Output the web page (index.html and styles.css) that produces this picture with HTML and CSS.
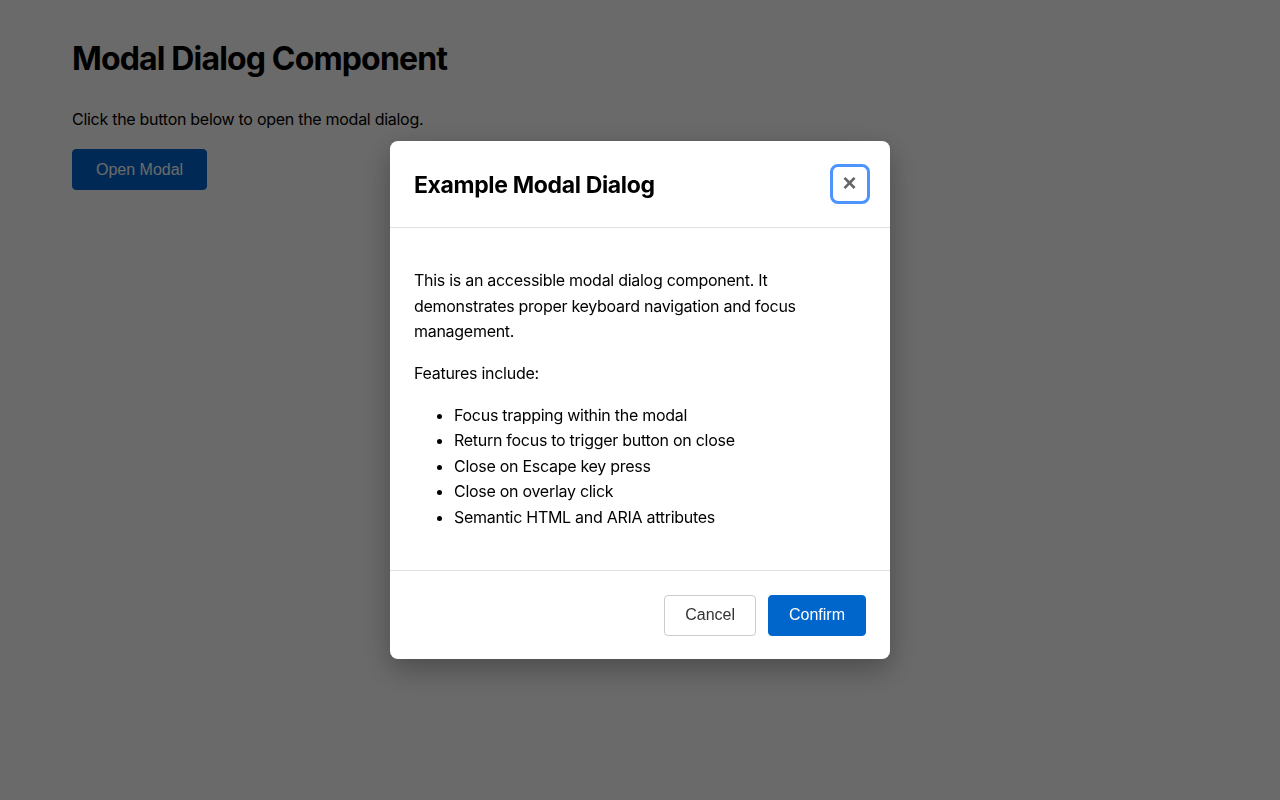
FILE: index.html
```html
<!DOCTYPE html>
<html lang="en">
<head>
<meta charset="utf-8">
<title>Modal Dialog Component</title>
<link rel="stylesheet" href="styles.css">
</head>
<body>
<main class="page">
  <h1 class="page-title">Modal Dialog Component</h1>
  <p class="page-text">Click the button below to open the modal dialog.</p>
  <button class="btn btn-primary open-btn" type="button">Open Modal</button>
</main>

<div class="overlay">
  <div class="modal" role="dialog" aria-modal="true" aria-labelledby="modal-title">
    <header class="modal-header">
      <h2 class="modal-title" id="modal-title">Example Modal Dialog</h2>
      <button class="close-btn" type="button" aria-label="Close">&times;</button>
    </header>
    <div class="modal-body">
      <p>This is an accessible modal dialog component. It demonstrates proper keyboard navigation and focus management.</p>
      <p>Features include:</p>
      <ul>
        <li>Focus trapping within the modal</li>
        <li>Return focus to trigger button on close</li>
        <li>Close on Escape key press</li>
        <li>Close on overlay click</li>
        <li>Semantic HTML and ARIA attributes</li>
      </ul>
    </div>
    <footer class="modal-footer">
      <button class="btn btn-secondary" type="button">Cancel</button>
      <button class="btn btn-primary" type="button">Confirm</button>
    </footer>
  </div>
</div>
</body>
</html>
```

FILE: styles.css
```css
* { box-sizing: border-box; }

html, body {
  margin: 0;
  height: 100%;
}

body {
  background: #ffffff;
  color: #000000;
  font-family: Inter, "Noto Sans", "Liberation Sans", sans-serif;
  font-size: 16px;
  line-height: 1.6;
  letter-spacing: -0.28px;
}

.page {
  padding: 35px 72px;
}

.page-title {
  margin: 0 0 24px;
  font-size: 32px;
  font-weight: 700;
  line-height: 48px;
  letter-spacing: -0.85px;
}

.page-text {
  margin: 0 0 18px;
  line-height: 24px;
}

.btn {
  font-family: "Liberation Sans", Arial, sans-serif;
  font-size: 16px;
  line-height: 1.15;
  letter-spacing: 0;
  border-radius: 4px;
  cursor: pointer;
}

.btn-primary {
  background: #0066cc;
  color: #ffffff;
  border: 1px solid #0066cc;
  padding: 10px 20px;
}

.btn-secondary {
  background: #ffffff;
  color: #333333;
  border: 1px solid #cccccc;
  padding: 10px 20px;
}

.open-btn {
  padding: 10.5px 23px;
}

.overlay {
  position: fixed;
  inset: 0;
  background: rgba(0, 0, 0, 0.585);
  display: flex;
  align-items: center;
  justify-content: center;
}

.modal {
  width: 500px;
  background: #ffffff;
  border-radius: 8px;
  box-shadow: 0 10px 30px rgba(0, 0, 0, 0.3);
}

.modal-header {
  display: flex;
  align-items: center;
  justify-content: space-between;
  padding: 23px 20px 23px 24px;
  border-bottom: 1px solid #e0e0e0;
}

.modal-title {
  margin: 0;
  padding-top: 3px;
  font-size: 23px;
  font-weight: 700;
  line-height: 1.3;
  letter-spacing: -0.35px;
}

.close-btn {
  width: 40px;
  height: 40px;
  display: flex;
  align-items: center;
  justify-content: center;
  padding: 0 1px 2px 0;
  background: #ffffff;
  border: 3px solid #4d94ff;
  border-radius: 8px;
  color: #666666;
  font-family: "Liberation Sans", Arial, sans-serif;
  font-size: 24px;
  font-weight: 700;
  line-height: 1;
  cursor: pointer;
}

.modal-body {
  padding: 24px;
}

.modal-body p {
  margin: 16px 0;
}

.modal-body ul {
  margin: 16px 0;
  padding-left: 40px;
}

.modal-footer {
  display: flex;
  justify-content: flex-end;
  gap: 12px;
  padding: 24px 24px 23px;
  border-top: 1px solid #e0e0e0;
}
```
